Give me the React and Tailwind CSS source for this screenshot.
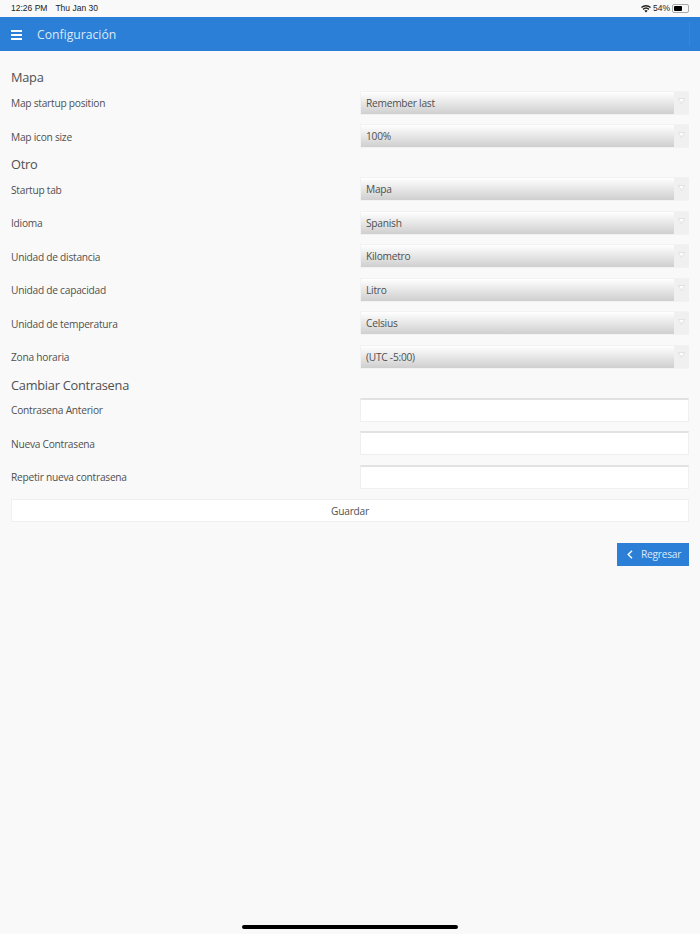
function Caret() {
  return (
    <div className="w-[15px] h-full bg-[#f0f0f0] flex items-center justify-center shrink-0 pb-[3px]">
      <svg width="7" height="6" viewBox="0 0 7 6"><path d="M0.5 0.5H6.5L3.5 5.5Z" fill="#ffffff" stroke="#d4d4d4" strokeWidth="0.6" /></svg>
    </div>
  );
}

function Row({ label, children }) {
  return (
    <div className="h-[33.5px] flex items-center">
      <div className="w-[349px] text-[10.2px] tracking-[-0.25px] leading-[14px] pt-px text-[#505050]">{label}</div>
      <div className="flex-1 h-[24px]">{children}</div>
    </div>
  );
}

function Select({ value }) {
  return (
    <div className="h-full flex border border-[#f2f2f2] border-r-0">
      <div className="flex-1 bg-gradient-to-b from-[#ffffff] to-[#cfcfcf] flex items-center pl-[5px] pt-px text-[10.2px] tracking-[-0.25px] text-[#505050]">{value}</div>
      <Caret />
    </div>
  );
}

function Input() {
  return <div className="h-full bg-white border border-[#efefef] border-t-2 border-t-[#e2e2e2]" />;
}

function Heading({ children, first }) {
  return <div className={first ? "h-[19.5px] flex items-center pt-px text-[12.8px] tracking-[-0.25px] leading-[18px] text-[#505050]" : "h-[19.5px] flex items-center pt-[3px] text-[12.8px] tracking-[-0.25px] leading-[18px] text-[#505050]"}>{children}</div>;
}

export default function App() {
  return (
    <div className="h-[934px] bg-[#f9f9f9] relative overflow-hidden font-['Open_Sans',sans-serif]">
      <div className="h-[17px] flex items-center justify-between px-[11px] text-[8.5px] text-[#222] font-['Liberation_Sans',sans-serif]">
        <div className="flex gap-[8px]"><span>12:26 PM</span><span>Thu Jan 30</span></div>
        <div className="flex items-center gap-[2px]">
          <svg width="10" height="8" viewBox="0 0 10 8" fill="#222"><path d="M5 7.6 3.4 5.8a2.4 2.4 0 0 1 3.2 0ZM2.6 4.9 1.6 3.8a5 5 0 0 1 6.8 0L7.4 4.9a3.6 3.6 0 0 0-4.8 0ZM.9 3 0 2a7.4 7.4 0 0 1 10 0L9.1 3A6.1 6.1 0 0 0 .9 3Z"/></svg>
          <span>54%</span>
          <div className="w-[17px] h-[9px] rounded-[2px] border border-[#aaa] p-px"><div className="w-[8px] h-full bg-black rounded-[1px]" /></div>
        </div>
      </div>
      <div className="h-[34px] bg-[#2b7fd6] flex items-center pl-[11px] relative">
        <div className="w-[11px] flex flex-col gap-[2px] mt-px">
          <div className="h-[2px] bg-white" /><div className="h-[2px] bg-white" /><div className="h-[2px] bg-white" />
        </div>
        <div className="ml-[15px] mt-[2px] text-[12.2px] text-[#dbe9f8]">Configuración</div>
        <div className="absolute left-[689px] top-[5px] h-[24px] w-px bg-[#3a86d6]" />
      </div>
      <div className="px-[11px] pt-[15.5px]">
        <Heading first>Mapa</Heading>
        <Row label="Map startup position"><Select value="Remember last" /></Row>
        <Row label="Map icon size"><Select value="100%" /></Row>
        <Heading>Otro</Heading>
        <Row label="Startup tab"><Select value="Mapa" /></Row>
        <Row label="Idioma"><Select value="Spanish" /></Row>
        <Row label="Unidad de distancia"><Select value="Kilometro" /></Row>
        <Row label="Unidad de capacidad"><Select value="Litro" /></Row>
        <Row label="Unidad de temperatura"><Select value="Celsius" /></Row>
        <Row label="Zona horaria"><Select value="(UTC -5:00)" /></Row>
        <Heading>Cambiar Contrasena</Heading>
        <Row label="Contrasena Anterior"><Input /></Row>
        <Row label="Nueva Contrasena"><Input /></Row>
        <Row label="Repetir nueva contrasena"><Input /></Row>
        <div className="mt-[5px] h-[23px] bg-white border border-[#efefef] flex items-center justify-center pt-[3px] text-[10.2px] tracking-[-0.25px] text-[#505050]">Guardar</div>
        <div className="mt-[21px] flex justify-end">
          <div className="w-[72px] h-[23px] bg-[#2b7fd6] flex items-center pl-[10px] pt-px text-[10.2px] tracking-[-0.25px] text-[#dbe9f8]">
            <svg width="6" height="9" viewBox="0 0 6 9" fill="none" stroke="#fff" strokeWidth="1.4"><path d="M5 .8 1.2 4.5 5 8.2"/></svg>
            <span className="ml-[8px]">Regresar</span>
          </div>
        </div>
      </div>
      <div className="absolute bottom-[5px] left-[242px] w-[216px] h-[4px] rounded-full bg-black" />
    </div>
  );
}
